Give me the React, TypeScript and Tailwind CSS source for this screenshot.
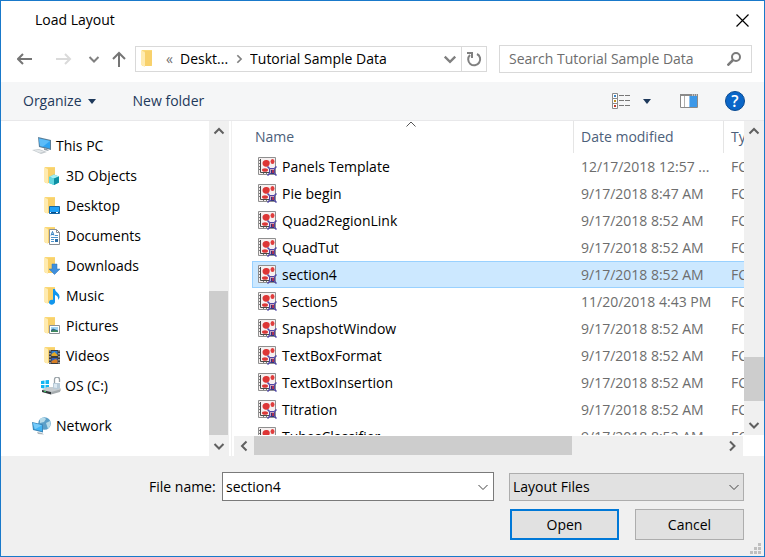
import React, { useState } from 'react';

type IconProps = { className?: string };

const files = [
  { name: 'Panels Template', date: '12/17/2018 12:57 ...' },
  { name: 'Pie begin', date: '9/17/2018 8:47 AM' },
  { name: 'Quad2RegionLink', date: '9/17/2018 8:52 AM' },
  { name: 'QuadTut', date: '9/17/2018 8:52 AM' },
  { name: 'section4', date: '9/17/2018 8:52 AM' },
  { name: 'Section5', date: '11/20/2018 4:43 PM' },
  { name: 'SnapshotWindow', date: '9/17/2018 8:52 AM' },
  { name: 'TextBoxFormat', date: '9/17/2018 8:52 AM' },
  { name: 'TextBoxInsertion', date: '9/17/2018 8:52 AM' },
  { name: 'Titration', date: '9/17/2018 8:52 AM' },
  { name: 'TubesClassifier', date: '9/17/2018 8:52 AM' }
];

const Chevron: React.FC<{ dir: 'up' | 'down' | 'left' | 'right'; className?: string; width?: number }> = ({
  dir,
  className = 'w-3 h-3 text-[#606060]',
  width = 2
}) => {
  const paths = {
    up: 'M1.5 8.5 6 4l4.500 4.500',
    down: 'M1.500 4 6 8.500 10.500 4',
    left: 'M8.500 1.500 4 6l4.500 4.500',
    right: 'M4 1.500 8.500 6 4 10.500'
  };
  return (
    <svg viewBox="0 0 12 12" className={className} fill="none" stroke="currentColor" strokeWidth={width} aria-hidden="true">
      <path d={paths[dir]} />
    </svg>
  );
};

const FolderIcon: React.FC<{ children?: React.ReactNode }> = ({ children }) => (
  <svg viewBox="0 0 18 18" className="w-[18px] h-[18px] shrink-0" aria-hidden="true">
    <path d="M2 0h10v16H2z" fill="#fbd978" />
    <path d="M5 1h7v13l-1 2H5z" fill="#f8d16c" />
    <path d="M1 0l4 2.500V17l-4-2z" fill="#ffebb0" />
    {children}
  </svg>
);

const PcIcon = () => (
  <svg viewBox="0 0 20 18" className="w-5 h-[18px] shrink-0" aria-hidden="true">
    <path d="M6 0l13 3v10L7 10z" fill="#5b7f99" />
    <path d="M7 1.500l11 2.500v7.500L8 9z" fill="#2ea3f2" />
    <path d="M7 1.500l11 2.500-7 5.500L8 9z" fill="#5cbcf8" />
    <path d="M12 11l3 1 2 2-5-1z" fill="#8d9aa3" />
    <path d="M0 13l7-1 8 3-6 2z" fill="#c3c9cd" />
    <path d="M2 13.500l5-.8 5 2-4 1z" fill="#e4e8ea" />
  </svg>
);

const DriveIcon = () => (
  <svg viewBox="0 0 20 18" className="w-5 h-[18px] shrink-0" aria-hidden="true">
    <path d="M0 4l3.500-.5V7H0zM4.500 3.300L8 3v4H4.500zM0 8h3.500v3.500L0 11zM4.500 8H8v4l-3.500-.4z" fill="#12b5f2" />
    <path d="M1 13l5-3h12l2 2v2l-10 3-9-2z" fill="#c8cdd0" />
    <path d="M1 13l9 2v2.500L1 15z" fill="#33383c" />
    <path d="M10 15l9-2.500V15l-9 2.500z" fill="#a5abae" />
    <path d="M3 14.200l2 .5" stroke="#41d36a" />
    <path d="M13.500 6V2.500a2.500 2.500 0 0 1 5 0V5" fill="none" stroke="#9aa3a8" strokeWidth="1.300" />
    <path d="M12 6h7v5l-3 1.500-4-1z" fill="#b9cbd8" />
    <path d="M13 7h3v4l-3-.5z" fill="#dce8f0" />
  </svg>
);

const NetworkIcon = () => (
  <svg viewBox="0 0 20 18" className="w-5 h-[18px] shrink-0" aria-hidden="true">
    <circle cx="12.500" cy="6.500" r="6.300" fill="#5b9fc8" />
    <path d="M8 2c3-2 5-1 6 0l-2 3-4 1zM14 6l4-2c1 3 0 6-2 8z" fill="#b7dbe9" />
    <path d="M0 5l11 2.500v8L1 13z" fill="#3b87b9" />
    <path d="M1 6l9 2.300v6L2 12z" fill="#42b4f4" />
    <path d="M1 6l9 2.300-7 4z" fill="#76cbfa" />
    <path d="M5 15l5 1 2 1.500-6-.5z" fill="#aab4ba" />
  </svg>
);

// scatter plot page with a small gate badge in the corner
const LayoutFileIcon: React.FC<IconProps> = ({ className = '' }) => (
  <svg viewBox="0 0 19 19" className={`w-[19px] h-[19px] shrink-0 ${className}`} aria-hidden="true">
    <path d="M.5.5h17v17H.5z" fill="#f6f0f0" stroke="#8f8f8f" />
    <path d="M2.500 2v13.500H13" fill="none" stroke="#4a4a4a" />
    <path d="M1 3.500h1M1 6.500h1M1 9.500h1M1 12.500h1M5.500 16v1M8.500 16v1" stroke="#777" />
    <path d="M4.500 6c0-2 2-3.500 4.500-3 2 .3 3 1.500 2.700 3.500-.3 2.500-2.200 3.500-4.200 3.300C5.500 9.500 4.500 8 4.500 6z" fill="#dd3636" />
    <ellipse cx="14.500" cy="4.500" rx="2" ry="2.500" fill="#df3d3d" />
    <ellipse cx="7" cy="13" rx="3" ry="1.800" fill="#db3838" />
    <path d="M11.500 11.500h5v5h-5z" fill="#c9a3bb" stroke="#4f46a6" />
    <path d="M9.500 9.500l2 2M18.500 9.500l-2 2M9.500 18.500l2-2M18.500 18.500l-2-2" stroke="#4f46a6" strokeWidth="1.500" />
    <path d="M13 13h3v3h-3z" fill="#a83257" />
    <path d="M13.500 13v3.500H16" fill="none" stroke="#2f357f" />
  </svg>
);

const places = [
  {
    name: '3D Objects',
    art: (
      <>
        <path d="M6 10l5-2.500 5 2v6L11 18l-5-2z" fill="#2cb9c9" />
        <path d="M6 10l5-2.500 5 2-5 2z" fill="#a6eef2" />
        <path d="M6 10l5 1.500V18l-5-2z" fill="#63d6df" />
        <path d="M11 11.500l5-2v6L11 18z" fill="#0e8fa3" />
      </>
    )
  },
  {
    name: 'Desktop',
    art: (
      <>
        <path d="M6.500 9.500h10v7h-10z" fill="#1fa0f5" stroke="#1567a5" />
        <path d="M7 15h9v1H7z" fill="#0a4d86" />
        <path d="M7 15.500h1M13 15.500h2" stroke="#fff" />
      </>
    )
  },
  {
    name: 'Documents',
    art: (
      <>
        <path d="M6.500 2.500h7l3 3v12h-10z" fill="#fff" stroke="#8a8f94" />
        <path d="M13.500 2.500v3h3" fill="none" stroke="#8a8f94" />
        <path d="M8 8.500l1.500-4 1.500 4M8.500 7.500h2" fill="none" stroke="#2f7fc1" />
        <path d="M12 8.500h3M8 10.500h7M8 12.500h3M8 14.500h3" stroke="#4d94cc" />
        <path d="M12 12h3v3h-3z" fill="#2d6fa8" />
      </>
    )
  },
  { name: 'Downloads', art: <path d="M9 7h5v5h3l-5.500 5.500L6 12h3z" fill="#3f8fdc" stroke="#2c74bb" strokeWidth=".5" /> },
  {
    name: 'Music',
    art: (
      <path d="M10 2h2c0 3 5 4 4.500 8.500-.3 1.300-1 2-1.500 2.500.6-3-1-4.500-3-5v6.500c0 4-6 4-6 1 0-2.500 2.500-3 4-2.500z" fill="#1196ee" />
    )
  },
  {
    name: 'Pictures',
    art: (
      <>
        <path d="M6.500 8.500h10v8h-10z" fill="#fff" stroke="#8c9298" />
        <path d="M8 10h7v5H8z" fill="#9ed4f5" />
        <path d="M8 13l2-1.500 5 2V15H8z" fill="#35668c" />
        <path d="M8 14l4-1 3 1v1H8z" fill="#3f8a5c" />
      </>
    )
  },
  {
    name: 'Videos',
    art: (
      <>
        <path d="M6 3h11v14H6z" fill="#3c3c3c" />
        <path d="M7 3v14M16 3v14" stroke="#e8e8e8" strokeDasharray="1.500 1.500" />
        <path d="M8.500 4h6v5h-6z" fill="#2e7fd4" />
        <path d="M8.500 7l3-2 3 3v1h-6z" fill="#e6a925" />
        <path d="M8.500 11h6v5h-6z" fill="#2e5fbd" />
        <path d="M8.500 14l4-2 2 1v3h-6z" fill="#d77e24" />
      </>
    )
  }
];

const App: React.FC = () => {
  const [selected, setSelected] = useState('section4');
  const [fileName, setFileName] = useState('section4');

  const pickFile = (name: string) => {
    setSelected(name);
    setFileName(name);
  };

  return (
    <div className="h-screen flex flex-col bg-white border border-[#1979ca] overflow-hidden font-['Open_Sans','Noto_Sans',sans-serif] text-sm text-black">
      {/* Title bar */}
      <header className="flex items-center justify-between h-[38px] shrink-0 pl-[34px] pr-[15px]">
        <h1>Load Layout</h1>
        <button aria-label="Close">
          <svg viewBox="0 0 13 13" className="w-[13px] h-[13px]" stroke="#000" strokeWidth="1.200" aria-hidden="true">
            <path d="M.5.5l12 12M12.500.5l-12 12" />
          </svg>
        </button>
      </header>

      {/* Navigation */}
      <nav className="flex items-center h-10 shrink-0 pl-4 pr-3">
        <button aria-label="Back">
          <svg viewBox="0 0 16 14" className="w-4 h-3.5" fill="none" stroke="#757575" strokeWidth="2" aria-hidden="true">
            <path d="M15 7H1M6 2L1 7l5 5" />
          </svg>
        </button>
        <button aria-label="Forward" className="ml-[23px]" disabled>
          <svg viewBox="0 0 16 14" className="w-4 h-3.5" fill="none" stroke="#dadada" strokeWidth="2" aria-hidden="true">
            <path d="M0 7h14M9 2l5 5-5 5" />
          </svg>
        </button>
        <button aria-label="Recent locations" className="ml-4">
          <Chevron dir="down" className="w-3 h-3 text-[#808080]" />
        </button>
        <button aria-label="Up" className="ml-3">
          <svg viewBox="0 0 14 16" className="w-3.5 h-4" fill="none" stroke="#757575" strokeWidth="2" aria-hidden="true">
            <path d="M7 16V2M1 8l6-6 6 6" />
          </svg>
        </button>

        <div className="flex items-center flex-1 min-w-0 h-[26px] ml-[9px] border border-[#d9d9d9]">
          <span className="pl-1 mr-2">
            <FolderIcon />
          </span>
          <span className="w-3.5 text-[#6e6e6e]">«</span>
          <button>Deskt...</button>
          <Chevron dir="right" className="w-2.5 h-2.5 mx-1.5 text-[#808080]" />
          <button className="truncate">Tutorial Sample Data</button>
          <button aria-label="Previous locations" className="ml-auto mr-1">
            <Chevron dir="down" className="w-3.5 h-3.5 text-[#808080]" />
          </button>
          <button aria-label="Refresh" className="flex items-center justify-center w-[25px] h-full border-l border-[#d9d9d9]">
            <svg viewBox="0 0 16 16" className="w-4 h-4" fill="none" stroke="#808080" strokeWidth="2" aria-hidden="true">
              <path d="M11 3a6 6 0 1 1-7 1" />
              <path d="M1 2h5v5" />
            </svg>
          </button>
        </div>

        <label className="flex items-center w-[253px] shrink-0 h-7 ml-3 pl-[9px] pr-2.5 border border-[#d9d9d9]">
          <input
            type="text"
            aria-label="Search Tutorial Sample Data"
            placeholder="Search Tutorial Sample Data"
            className="flex-1 min-w-0 outline-none placeholder:text-[#6d6d6d]"
          />
          <svg viewBox="0 0 14 14" className="w-3.5 h-3.5 shrink-0" fill="none" stroke="#7a7a7a" aria-hidden="true">
            <circle cx="9" cy="5" r="4" strokeWidth="2" />
            <path d="M6 8l-5.500 5.500" strokeWidth="2.500" />
          </svg>
        </label>
      </nav>

      {/* Toolbar */}
      <div className="flex items-center h-[39px] shrink-0 mt-[3px] pl-[22px] pr-[19px] bg-[#f5f6f7] border-b border-[#e8e8ea] text-[#1e395b]">
        <button className="flex items-center gap-1.5">
          Organize
          <svg viewBox="0 0 8 5" className="w-2 h-[5px]" fill="currentColor" aria-hidden="true">
            <path d="M0 0h8L4 5z" />
          </svg>
        </button>
        <button className="ml-[37px]">New folder</button>
        <button aria-label="Change your view" className="ml-auto">
          <svg viewBox="0 0 18 16" className="w-[18px] h-4" fill="none" aria-hidden="true">
            <path d="M.5.5h5v5h-5zM.5 5.500h5v5h-5zM.5 10.500h5v5h-5z" fill="#fff" stroke="#8a8a8a" />
            <path d="M7 2.500h5M13 2.500h5M7 7.500h5M13 7.500h5M7 12.500h5M13 12.500h5" stroke="#777" />
            <path d="M2 2h2v2H2z" fill="#3c86c6" />
            <path d="M2 7h2v2H2z" fill="#c09020" />
            <path d="M2 12h2v2H2z" fill="#c03a2b" />
          </svg>
        </button>
        <button aria-label="More options" className="ml-[13px]">
          <svg viewBox="0 0 8 5" className="w-2 h-[5px]" fill="currentColor" aria-hidden="true">
            <path d="M0 0h8L4 5z" />
          </svg>
        </button>
        <button aria-label="Show the preview pane" className="ml-[29px]">
          <svg viewBox="0 0 18 14" className="w-[18px] h-3.5" aria-hidden="true">
            <path d="M.5.5h17v13H.5z" fill="#fff" stroke="#8a8a8a" />
            <path d="M0 0h18v2H0z" fill="#8a8a8a" />
            <path d="M12 1h1M14 1h1M16 1h1" stroke="#fff" />
            <path d="M4.500 2v11" stroke="#b0b0b0" />
            <path d="M9 2h8v11H9z" fill="#3c98e8" />
            <path d="M9 2h1v11H9z" fill="#8cc3f3" />
          </svg>
        </button>
        <button
          aria-label="Get help"
          className="flex items-center justify-center w-5 h-5 ml-[27px] rounded-full bg-[#0a66c8] border border-[#0a4a91] text-base leading-4 font-semibold text-white"
        >
          ?
        </button>
      </div>

      {/* Body */}
      <main className="flex flex-1 min-h-0">
        <aside className="flex w-[228px] shrink-0">
          <ul className="flex-1 min-w-0 pt-2.5">
            <li className="flex items-center gap-1 h-[30px] pl-[31px]">
              <PcIcon />
              This PC
            </li>
            {places.map((place) => (
              <li key={place.name} className="flex items-center gap-[5px] h-[30px] pl-[42px]">
                <FolderIcon>{place.art}</FolderIcon>
                {place.name}
              </li>
            ))}
            <li className="flex items-center gap-1 h-[30px] pl-10">
              <DriveIcon />
              OS (C:)
            </li>
            <li className="flex items-center gap-1 h-[30px] mt-2.5 pl-[31px]">
              <NetworkIcon />
              Network
            </li>
          </ul>
          <div className="flex flex-col w-5 bg-[#f0f0f0]">
            <button aria-label="Scroll folders up" className="flex items-center justify-center h-5">
              <Chevron dir="up" />
            </button>
            <div className="flex flex-col flex-1">
              <div className="h-[49%] mt-auto mr-px bg-[#cdcdcd]" />
            </div>
            <button aria-label="Scroll folders down" className="flex items-center justify-center h-[21px]">
              <Chevron dir="down" />
            </button>
          </div>
        </aside>

        <section className="flex flex-col flex-1 min-w-0 ml-0.5 border-l border-[#f0f0f0]">
          <div className="flex flex-1 min-h-0">
            <div className="flex-1 min-w-0 overflow-hidden mb-px">
              <table className="w-[640px] table-fixed border-separate border-spacing-0 text-left">
                <colgroup>
                  <col className="w-5" />
                  <col className="w-[321px]" />
                  <col className="w-[150px]" />
                  <col />
                </colgroup>
                <thead className="text-[#4c607a]">
                  <tr>
                    <th className="p-0" />
                    <th className="relative h-8 p-0 pl-[3px] font-normal">
                      Name
                      <Chevron dir="up" width={1} className="absolute top-[-3px] left-1/2 w-3 h-3 -ml-2 text-[#555]" />
                    </th>
                    <th className="h-8 p-0 pl-[7px] font-normal border-l border-[#e5e5e5]">Date modified</th>
                    <th className="h-8 p-0 pl-[7px] font-normal border-l border-[#e5e5e5]">Type</th>
                  </tr>
                </thead>
                <tbody>
                  {files.map((file) => {
                    const active = file.name === selected;
                    const fill = active ? 'bg-[#cce8ff] border-y border-[#99d1ff]' : '';
                    return (
                      <tr key={file.name} onClick={() => pickFile(file.name)}>
                        <td className="p-0" />
                        <td className={`h-[27px] p-0 ${active ? 'pl-[5px] border-l' : 'pl-1.5'} ${fill}`}>
                          <div className="flex items-center gap-[5px]">
                            <LayoutFileIcon />
                            {file.name}
                          </div>
                        </td>
                        <td className={`h-[27px] p-0 pl-2 whitespace-nowrap text-[#6d6d6d] ${fill}`}>{file.date}</td>
                        <td className={`h-[27px] p-0 pl-2 whitespace-nowrap text-[#6d6d6d] ${fill}`}>FCS Layout</td>
                      </tr>
                    );
                  })}
                </tbody>
              </table>
            </div>
            <div className="flex flex-col w-5 shrink-0 mb-px bg-[#f0f0f0]">
              <button aria-label="Scroll files up" className="flex items-center justify-center h-5">
                <Chevron dir="up" />
              </button>
              <div className="flex flex-col flex-1 pb-[13px]">
                <div className="h-11 mt-auto bg-[#cdcdcd]" />
              </div>
              <button aria-label="Scroll files down" className="flex items-center justify-center h-[21px]">
                <Chevron dir="down" />
              </button>
            </div>
          </div>
          <div className="flex h-5 shrink-0 ml-0.5 mr-[21px] bg-[#f0f0f0]">
            <button aria-label="Scroll files left" className="flex items-center justify-center w-5">
              <Chevron dir="left" />
            </button>
            <div className="flex-1">
              <div className="w-[68%] h-[19px] bg-[#cdcdcd]" />
            </div>
            <button aria-label="Scroll files right" className="flex items-center justify-center w-[22px]">
              <Chevron dir="right" />
            </button>
          </div>
        </section>
      </main>

      {/* Footer */}
      <footer className="relative shrink-0 pt-4 pb-4 pl-[148px] pr-5 bg-[#f0f0f0]">
        <div className="flex items-center">
          <label htmlFor="file-name" className="w-[73px] shrink-0">
            File name:
          </label>
          <div className="flex flex-1 min-w-0 h-[29px] bg-white border border-[#7a7a7a]">
            <input
              id="file-name"
              type="text"
              value={fileName}
              onChange={(e) => setFileName(e.target.value)}
              className="flex-1 min-w-0 pl-[3px] outline-none"
            />
            <button aria-label="Recent file names" className="px-1">
              <Chevron dir="down" width={1} className="w-3 h-3 text-[#444]" />
            </button>
          </div>
          <div className="relative w-[235px] shrink-0 ml-[15px]">
            <select
              aria-label="File type"
              className="appearance-none w-full h-7 pl-[3px] bg-[#e1e1e1] border border-[#adadad] outline-none"
            >
              <option>Layout Files</option>
            </select>
            <Chevron dir="down" width={1} className="absolute top-2 right-1 w-3 h-3 text-[#444] pointer-events-none" />
          </div>
        </div>
        <div className="flex justify-end gap-4 mt-2">
          <button className="w-[109px] h-[31px] bg-[#e1e1e1] border-2 border-[#0078d7]">Open</button>
          <button className="w-[109px] h-[31px] bg-[#e1e1e1] border border-[#adadad]">Cancel</button>
        </div>
        <svg viewBox="0 0 11 11" className="absolute right-[3px] bottom-0.5 w-[11px] h-[11px]" fill="#bfbfbf" aria-hidden="true">
          <path d="M8 0h3v3H8zM8 4h3v3H8zM4 4h3v3H4zM8 8h3v3H8zM4 8h3v3H4zM0 8h3v3H0z" />
        </svg>
      </footer>
    </div>
  );
};

export default App;
